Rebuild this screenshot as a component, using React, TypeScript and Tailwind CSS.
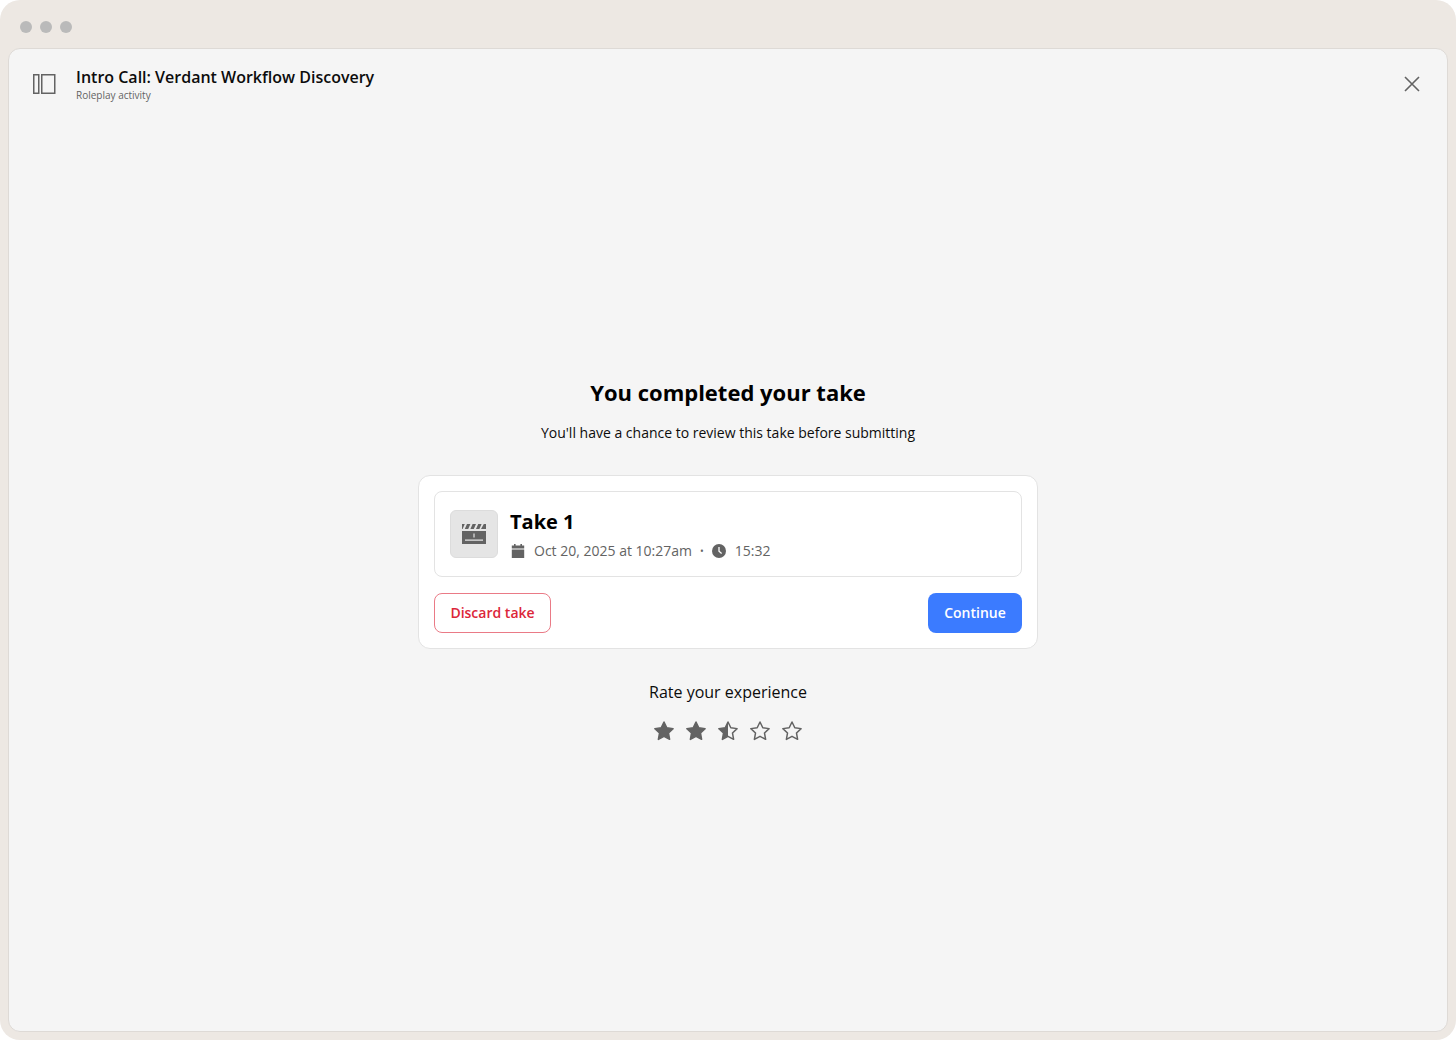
const STAR =
  "M12 3l2.8 5.75 6.3.88-4.6 4.43 1.12 6.3L12 17.35l-5.62 3.01 1.12-6.3-4.6-4.43 6.3-.88z";

const StarIcon = ({ fill }: { fill: "full" | "half" | "none" }) => (
  <svg width="24" height="24" viewBox="0 0 24 24" className="shrink-0">
    {fill === "half" && <path d="M12 3v14.35l-5.62 3.01 1.12-6.3-4.6-4.43 6.3-.88z" fill="#636363" />}
    <path
      d={STAR}
      fill={fill === "full" ? "#636363" : "none"}
      stroke="#636363"
      strokeWidth="1.5"
      strokeLinejoin="round"
    />
  </svg>
);

const SidebarIcon = () => (
  <svg width="24" height="20" viewBox="0 0 24 20" fill="none" stroke="#636363" strokeWidth="1.5">
    <rect x="1.75" y="0.75" width="5" height="18.5" />
    <rect x="9.75" y="0.75" width="13" height="18.5" />
  </svg>
);

const ClapperIcon = () => (
  <svg width="24" height="20" viewBox="0 0 24 20" fill="#636363">
    <path d="M0 0h2.8L.6 5H0zM5 0h3.4L6.2 5H2.8zM10.6 0H14l-2.2 5H8.4zM16.2 0h3.4l-2.2 5H14zM21.8 0H24v5h-5z" />
    <path
      fillRule="evenodd"
      d="M0 7h24v13H0zM11.4 9.5v4h1.2v-4zM3 15.5v1.2h18v-1.2z"
    />
  </svg>
);

const CalendarIcon = () => (
  <svg width="14" height="14" viewBox="0 0 14 14" fill="#636363">
    <path d="M3 0h1.6v1.6h4.8V0H11v1.6h2.2v3H.8v-3H3zM.8 5.6h12.4V14H.8z" />
  </svg>
);

const ClockIcon = () => (
  <svg width="14" height="14" viewBox="0 0 14 14">
    <circle cx="7" cy="7" r="7" fill="#636363" />
    <path d="M7 3v4.2l2.6 2.2" fill="none" stroke="#fff" strokeWidth="1.3" />
  </svg>
);

export default function App() {
  return (
    <div className="h-[1040px] w-[1456px] rounded-[20px] bg-[#ede8e3] px-[8px] pb-[8px] font-['Open_Sans','Noto_Sans',sans-serif] antialiased flex flex-col">
      <div className="h-[48px] flex items-center gap-2 pl-3 pt-[6px] shrink-0">
        <span className="w-3 h-3 rounded-full bg-[#bababa]" />
        <span className="w-3 h-3 rounded-full bg-[#bababa]" />
        <span className="w-3 h-3 rounded-full bg-[#bababa]" />
      </div>
      <div className="flex-1 rounded-[12px] border border-[#dedad6] bg-[#f5f5f5] flex flex-col">
        <header className="flex items-start justify-between pl-[23px] pr-[25px] pt-[16px] h-[70px] shrink-0">
          <div className="flex items-start gap-[20px]">
            <div className="pt-[9px]">
              <SidebarIcon />
            </div>
            <div className="flex flex-col">
              <span className="text-[16px] leading-[24px] font-semibold text-[#0c0c0c]">
                Intro Call: Verdant Workflow Discovery
              </span>
              <span className="text-[10px] leading-[14px] text-[#636363] -mt-[1px]">Roleplay activity</span>
            </div>
          </div>
          <svg width="20" height="20" viewBox="0 0 20 20" className="mt-[9px]" fill="none" stroke="#636363" strokeWidth="1.6">
            <path d="M3 3l14 14M17 3L3 17" />
          </svg>
        </header>

        <main className="flex flex-col items-center pt-[257px]">
          <h1 className="text-[22px] leading-[32px] font-bold text-black">You completed your take</h1>
          <p className="mt-[15px] text-[14px] leading-[20px] text-[#0c0c0c]">
            You'll have a chance to review this take before submitting
          </p>

          <div className="mt-[32px] w-[620px] rounded-[12px] border border-[#e3e3e3] bg-white p-[15px]">
            <div className="h-[86px] rounded-[8px] border border-[#e3e3e3] bg-white flex items-center gap-3 px-[15px]">
              <div className="w-[48px] h-[48px] rounded-[6px] border border-[#dcdcdc] bg-[#e5e5e5] flex items-center justify-center">
                <ClapperIcon />
              </div>
              <div className="flex flex-col">
                <span className="text-[20px] leading-[28px] font-bold text-black">Take 1</span>
                <div className="mt-[5px] flex items-center text-[14px] leading-[20px] text-[#636363]">
                  <span className="ml-[1px]">
                    <CalendarIcon />
                  </span>
                  <span className="ml-[9px]">Oct 20, 2025 at 10:27am</span>
                  <span className="mx-[8px] text-[10px]">•</span>
                  <ClockIcon />
                  <span className="ml-[9px]">15:32</span>
                </div>
              </div>
            </div>
            <div className="mt-[16px] flex items-center justify-between">
              <button className="h-[40px] w-[117px] rounded-[8px] border border-[#ea7a86] bg-white pb-[2px] text-[14px] font-semibold text-[#dc2639]">
                Discard take
              </button>
              <button className="h-[40px] w-[94px] rounded-[8px] bg-[#3b7bff] pb-[2px] text-[14px] font-semibold text-white">
                Continue
              </button>
            </div>
          </div>

          <p className="mt-[31px] text-[16px] leading-[24px] text-[#0c0c0c]">Rate your experience</p>
          <div className="mt-[15px] flex items-center gap-[8px]">
            <StarIcon fill="full" />
            <StarIcon fill="full" />
            <StarIcon fill="half" />
            <StarIcon fill="none" />
            <StarIcon fill="none" />
          </div>
        </main>
      </div>
    </div>
  );
}
